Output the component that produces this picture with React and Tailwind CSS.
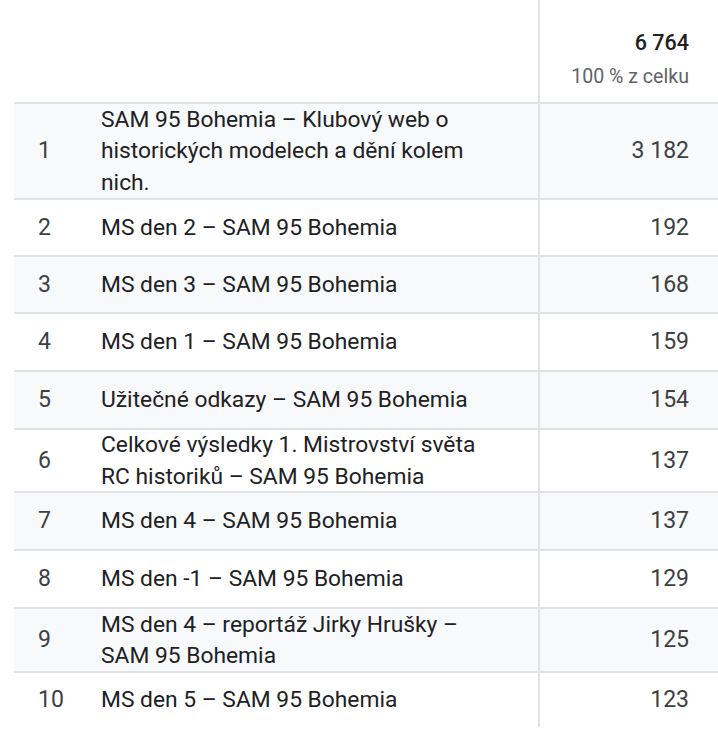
import React from "react";

const rows = [
  { n: 1, t: "SAM 95 Bohemia – Klubový web o historických modelech a dění kolem nich.", v: "3 182", h: "h-[96px]", g: true },
  { n: 2, t: "MS den 2 – SAM 95 Bohemia", v: "192", h: "h-[57px]", g: false },
  { n: 3, t: "MS den 3 – SAM 95 Bohemia", v: "168", h: "h-[57px]", g: true },
  { n: 4, t: "MS den 1 – SAM 95 Bohemia", v: "159", h: "h-[58px]", g: false },
  { n: 5, t: "Užitečné odkazy – SAM 95 Bohemia", v: "154", h: "h-[58px]", g: true },
  { n: 6, t: "Celkové výsledky 1. Mistrovství světa RC historiků – SAM 95 Bohemia", v: "137", h: "h-[63px]", g: false },
  { n: 7, t: "MS den 4 – SAM 95 Bohemia", v: "137", h: "h-[58px]", g: true },
  { n: 8, t: "MS den -1 – SAM 95 Bohemia", v: "129", h: "h-[58px]", g: false },
  { n: 9, t: "MS den 4 – reportáž Jirky Hrušky – SAM 95 Bohemia", v: "125", h: "h-[64px]", g: true },
  { n: 10, t: "MS den 5 – SAM 95 Bohemia", v: "123", h: "h-[56px]", g: false },
];

export default function App() {
  return (
    <div
      className="w-[718px] h-[735px] bg-white overflow-hidden"
      style={{ fontFamily: "Roboto, 'Noto Sans', sans-serif" }}
    >
      <div className="ml-[14px] flex flex-col">
        {/* header */}
        <div className="flex h-[102px]">
          <div className="w-[524px]" />
          <div className="flex-1 border-l-2 border-[#e0e2e6] flex flex-col items-end pr-[29px] pt-[29px]">
            <div className="h-[28px] leading-[28px] text-[21.5px] font-medium text-[#202124]">6 764</div>
            <div className="mt-[6px] h-[28px] leading-[28px] text-[19.6px] text-[#5f6368]">100 % z celku</div>
          </div>
        </div>
        {rows.map((r) => (
          <div
            key={r.n}
            className={`flex ${r.h} border-t-2 border-[#e0e2e6] ${r.g ? "bg-[#f8f9fa]" : "bg-white"}`}
          >
            <div className="w-[87px] pl-[24px] flex items-center text-[23px] leading-[31.5px] text-[#3c4043]">
              {r.n}
            </div>
            <div className="w-[437px] pr-[36px] flex items-center text-[22.8px] leading-[31.5px] text-[#202124]">
              <span>{r.t}</span>
            </div>
            <div className="flex-1 border-l-2 border-[#e0e2e6] flex items-center justify-end pr-[29px] text-[23px] leading-[31.5px] text-[#3c4043]">
              {r.v}
            </div>
          </div>
        ))}
      </div>
    </div>
  );
}
